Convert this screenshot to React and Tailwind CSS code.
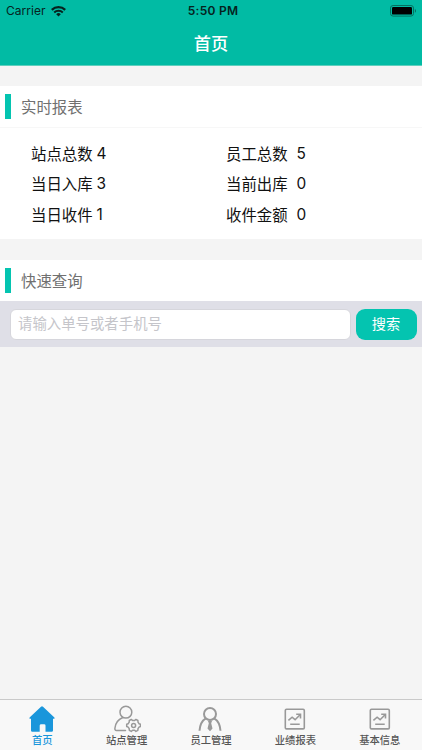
const stats = [
  { label: '站点总数', value: 4 },
  { label: '员工总数', value: 5 },
  { label: '当日入库', value: 3 },
  { label: '当前出库', value: 0 },
  { label: '当日收件', value: 1 },
  { label: '收件金额', value: 0 },
]

function WifiIcon() {
  return (
    <svg className="ml-[5px] h-[11px] w-[15px]" viewBox="0 0 15 11" fill="none" stroke="#06231e">
      <path d="M.8 3.900a9.600 9.600 0 0 1 13.400 0" strokeWidth="2.200" />
      <path d="M3.200 6.500a6.100 6.100 0 0 1 8.600 0" strokeWidth="2" />
      <path d="M7.500 10.400 5.200 8.200a3.300 3.300 0 0 1 4.600 0z" fill="#06231e" stroke="none" />
    </svg>
  )
}

function BatteryIcon() {
  return (
    <svg className="h-[12px] w-[27px]" viewBox="0 0 27 12">
      <rect x="0.5" y="0.5" width="23" height="10.6" rx="2.6" fill="none" stroke="#04715f" />
      <rect x="2" y="2" width="20" height="7.6" rx="1.2" fill="#000" />
      <path d="M24.9 3.9c1.5.6 1.5 3.2 0 3.8z" fill="#04715f" />
    </svg>
  )
}

function HomeIcon() {
  return (
    <svg className="h-[28px] w-[28px]" viewBox="0 0 28 28" fill="#1a96db">
      <path d="M13 1.7q1-.9 2 0L26.4 12.6q.9 1.2-.6 1.2H25v11.6q0 1.4-1.4 1.4h-6.1v-6.2q0-1.4-1.4-1.4h-3q-1.4 0-1.4 1.4v6.2H4.4Q3 26.8 3 25.4V13.8h-.8q-1.500 0-.6-1.200z" />
    </svg>
  )
}

function SiteIcon() {
  return (
    <svg
      className="h-[28px] w-[28px]"
      viewBox="0 0 28 28"
      fill="none"
      stroke="#999"
      strokeWidth="1.500"
      strokeLinejoin="round"
      strokeLinecap="round"
    >
      <circle cx="12.900" cy="7.200" r="5.900" />
      <path d="M9.800 12.500C5 14.500 2.300 18.500 1.900 23.300q-.2 2.100 1.500 2.100H12.500" />
      <path d="m18.300 14.400 1.300 1.100h2l1.300-1.100 2 1.100.1 1.700 1 1.500 1.500.6v2.200l-1.500.6-1 1.500-.1 1.700-2 1.100-1.300-1.100h-2l-1.300 1.100-2-1.100-.1-1.700-1-1.500-1.500-.6v-2.200l1.500-.6 1-1.500.1-1.700z" />
      <circle cx="20.600" cy="20.400" r="2" />
    </svg>
  )
}

function StaffIcon() {
  return (
    <svg className="h-[28px] w-[28px]" viewBox="0 0 28 28" fill="none" stroke="#999" strokeWidth="2">
      <circle cx="13" cy="9" r="6" />
      <path d="M8.900 13.300C5 15.500 2.900 19.800 2.500 25.800M17.100 13.300c3.900 2.200 6 6.500 6.400 12.500" />
      <path d="M10.900 15.700h4.200l-.9 2.500 1.300 5.300-2.500 2.700-2.500-2.700 1.300-5.300z" fill="#999" stroke="none" />
    </svg>
  )
}

function ReportIcon() {
  return (
    <svg className="h-[28px] w-[28px]" viewBox="0 0 28 28" fill="none" stroke="#999" strokeWidth="1.600">
      <rect x="4.300" y="4.200" width="19" height="19.700" rx="1.200" />
      <path d="m7.400 15.400 3.700-3.200 3 2.500 5-5" />
      <path d="M15.200 9.300h4.300v4.100M9.200 19.300h9.500" />
    </svg>
  )
}

const tabs = [
  { label: '首页', Icon: HomeIcon, active: true },
  { label: '站点管理', Icon: SiteIcon },
  { label: '员工管理', Icon: StaffIcon },
  { label: '业绩报表', Icon: ReportIcon },
  { label: '基本信息', Icon: ReportIcon },
]

function SectionTitle({ children }) {
  return (
    <div className="flex h-[41px] items-center pl-[5px]">
      <span className="h-[25px] w-[6px] bg-[#04c4b0]" />
      <h2 className="ml-[10px] pb-[2px] text-[15.400px] leading-[22px] text-[#707070]">{children}</h2>
    </div>
  )
}

function Header() {
  return (
    <header className="h-[66px] border-b border-[#5fcfbd] bg-[#01bba4]">
      <div className="grid h-[22px] grid-cols-3 items-center pr-[5px] pl-[6px] font-['Inter','Liberation_Sans',sans-serif] text-[12px] text-[#06231e]">
        <div className="flex items-center">
          <span className="tracking-[0.05px]">Carrier</span>
          <WifiIcon />
        </div>
        <span className="pl-[3px] text-center font-semibold tracking-[0.25px]">5:50 PM</span>
        <div className="flex justify-end">
          <BatteryIcon />
        </div>
      </div>
      <h1 className="mt-[8px] text-center text-[17.200px] leading-[26px] font-medium text-white">首页</h1>
    </header>
  )
}

export default function App() {
  return (
    <div className="flex h-[750px] w-[422px] flex-col overflow-hidden bg-[#f4f4f4] font-['Noto_Sans_CJK_SC',sans-serif]">
      <Header />

      <section className="mt-[20px] h-[153px] bg-white">
        <SectionTitle>实时报表</SectionTitle>
        <div className="grid grid-cols-[195px_1fr] border-t border-[#f7f7f7] pt-[10px] pl-[31px]">
          {stats.map(({ label, value }, i) => (
            <div key={label} className="flex h-[30.500px] items-center text-[15.400px] text-[#111]">
              <span>{label}</span>
              <span className={`font-['Inter',sans-serif] ${i % 2 ? 'ml-[9px]' : 'ml-[4px]'}`}>{value}</span>
            </div>
          ))}
        </div>
      </section>

      <section className="mt-[21px] bg-white">
        <SectionTitle>快速查询</SectionTitle>
        <div className="flex h-[46px] items-center gap-[5px] bg-[#dfdfe7] pr-[5.500px] pl-[10px]">
          <input
            className="h-[31px] min-w-0 flex-1 rounded-[6px] border border-[#d6d6dc] bg-white px-[7px] pb-[3px] text-[14.400px] placeholder:text-[#c5c5ca]"
            placeholder="请输入单号或者手机号"
          />
          <button className="h-[31px] w-[61px] rounded-[9px] bg-[#04c4b0] text-[14.200px] text-white">
            搜索
          </button>
        </div>
      </section>

      <nav className="mt-auto grid h-[51px] grid-cols-5 border-t border-[#c9c9c9] bg-[#f8f8f8]">
        {tabs.map(({ label, Icon, active }) => (
          <div key={label} className="flex flex-col items-center pt-[5px]">
            <Icon />
            <span
              className={`text-[10.300px] leading-[14px] font-medium ${active ? 'text-[#1a96db]' : 'text-[#555]'}`}
            >
              {label}
            </span>
          </div>
        ))}
      </nav>
    </div>
  )
}
